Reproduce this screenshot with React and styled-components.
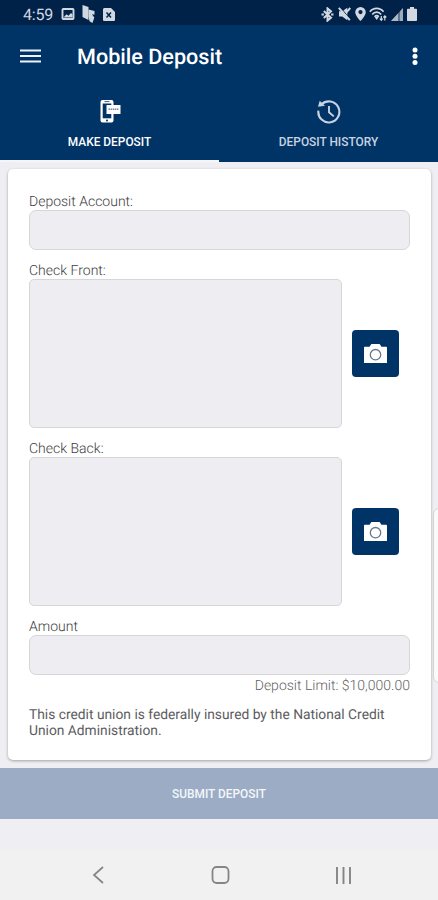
import React, { useState } from 'react';
import styled, { createGlobalStyle } from 'styled-components';

const GlobalStyle = createGlobalStyle`
  * {
    box-sizing: border-box;
  }

  body {
    margin: 0;
    background: #efeff2;
    font-family: Roboto, "Liberation Sans", sans-serif;
    text-rendering: geometricPrecision;
  }

  button {
    font-family: inherit;
    border: none;
    padding: 0;
  }

  svg {
    display: block;
  }
`;

const Screen = styled.div`
  position: relative;
  display: flex;
  flex-direction: column;
  width: 438px;
  height: 900px;
  overflow: hidden;
  background: #efeff3;
`;

const StatusBar = styled.div`
  display: flex;
  align-items: center;
  justify-content: space-between;
  height: 25px;
  padding: 3px 21px 0 23px;
  background: #002148;
  color: #d2d8e2;
`;

const StatusGroup = styled.div`
  display: flex;
  align-items: center;
  gap: ${props => props.$gap}px;
`;

const Clock = styled.span`
  width: 30px;
  padding-top: 1px;
  font-size: 16px;
  line-height: 20px;
  letter-spacing: -0.2px;
`;

const Header = styled.header`
  display: flex;
  align-items: center;
  height: 63px;
  padding: 0 20px;
  background: #003366;
  color: #fff;
`;

const IconButton = styled.button`
  display: flex;
  background: transparent;
  color: inherit;
`;

const Title = styled.h1`
  flex: 1;
  margin: 0 0 0 36px;
  padding-top: 2px;
  font-size: 21.6px;
  font-weight: 500;
  line-height: 28px;
`;

const Tabs = styled.nav`
  display: flex;
  height: 74px;
  background: #003366;
`;

const Tab = styled.button`
  display: flex;
  flex: 1;
  flex-direction: column;
  align-items: center;
  padding-top: 11px;
  background: transparent;
  border-bottom: 2px solid ${props => (props.$active ? '#f4f6fa' : 'transparent')};
  color: ${props => (props.$active ? '#fff' : '#c9d3e0')};
  font-size: 11.9px;
  font-weight: 500;
  line-height: 16px;

  svg {
    margin-bottom: 10px;
  }
`;

const Card = styled.main`
  height: 591px;
  margin: 7px 7px 8px 8px;
  padding: 24px 21px 0;
  background: #fff;
  border-radius: 5px;
  box-shadow: 0 1px 3px rgba(0, 0, 0, 0.32);
`;

const Field = styled.div`
  margin-bottom: 12px;
`;

const Label = styled.div`
  height: 17px;
  padding-top: 1px;
  color: #3c3c40;
  font-size: 14px;
  font-weight: 300;
  line-height: 17px;
`;

const Box = styled.div`
  width: ${props => (props.$photo ? '313px' : '381px')};
  height: ${props => (props.$photo ? '149px' : '40px')};
  background: #eeeef2;
  border: 1px solid #d6d6d9;
  border-radius: ${props => (props.$photo ? 5 : 7)}px;
`;

const PhotoRow = styled.div`
  display: flex;
  align-items: center;
  gap: 10px;
`;

const CameraButton = styled.button`
  display: flex;
  align-items: center;
  justify-content: center;
  width: 47px;
  height: 47px;
  padding-bottom: 2px;
  background: #003366;
  border-radius: 4px;
`;

const Limit = styled.div`
  width: 381px;
  padding-top: 2px;
  color: #5f5f63;
  font-size: 14px;
  font-weight: 300;
  line-height: 18px;
  text-align: right;
`;

const Notice = styled.p`
  margin: 0;
  color: #5c5c60;
  font-size: 13.8px;
  line-height: 16px;
`;

const Submit = styled.button`
  flex: none;
  height: 51px;
  background: #9cacc4;
  color: #f3f7fc;
  font-size: 11.9px;
  font-weight: 500;
`;

const NavBar = styled.div`
  display: flex;
  align-items: center;
  justify-content: space-between;
  height: 50px;
  margin-top: auto;
  padding: 0 86px 0 92px;
  background: #f1f1f2;
  color: #858588;
`;

// Drawer edge peeking in from the right side
const EdgePanel = styled.div`
  position: absolute;
  top: 508px;
  right: -8px;
  width: 13px;
  height: 175px;
  background: #fafafb;
  border: 1px solid #d3d3d6;
  border-radius: 6px;
`;

const MenuIcon = () => (
  <svg width="21" height="16" viewBox="0 0 21 16" stroke="#eef2f7" strokeWidth="2.1">
    <path d="M0 1.5h21M0 7h21M0 12.5h21" />
  </svg>
);

const MoreIcon = () => (
  <svg width="6" height="20" viewBox="0 0 6 20" fill="#fff">
    <circle cx="3" cy="3" r="2.5" />
    <circle cx="3" cy="9.3" r="2.5" />
    <circle cx="3" cy="15.6" r="2.5" />
  </svg>
);

const DepositIcon = () => (
  <svg width="22" height="25" viewBox="0 0 22 25">
    <path
      d="M3.5 1h9a2 2 0 0 1 2 2v18.5a2 2 0 0 1-2 2h-9a2 2 0 0 1-2-2V3a2 2 0 0 1 2-2Z"
      fill="#fff"
    />
    <path d="M3.7 4.5h8.6v14.8H3.7z" fill="#003366" />
    <path d="M5.5 2.6h5" stroke="#003366" strokeWidth="0.8" />
    <circle cx="8" cy="21.4" r="1" fill="#003366" />
    <path d="M7.5 6h14v9h-14z" fill="#fff" />
    <path d="M9.5 10.3h10" stroke="#7188a5" strokeWidth="1.5" strokeDasharray="1.5 0.6" />
  </svg>
);

const HistoryIcon = () => (
  <svg width="25" height="25" viewBox="0 0 25 25" fill="none" stroke="#c9d3e0">
    <path d="M5.5 5.4A10.5 10.5 0 1 1 2.4 11.7" strokeWidth="2.1" />
    <path d="M3.7 1.7 9 6.7 2 7.8Z" fill="#c9d3e0" stroke="none" />
    <path d="M13 7v6.2l4.8 4.2" strokeWidth="1.9" />
  </svg>
);

const CameraIcon = () => (
  <svg width="23" height="20" viewBox="0 0 23 20">
    <path
      d="M1 3.8h4.6L7 1.5c.3-.4.6-.5 1-.5h7c.4 0 .7.1 1 .5l1.4 2.3H22c.5 0 1 .4 1 1V20H0V4.8c0-.6.5-1 1-1Z"
      fill="#fff"
    />
    <circle cx="11.5" cy="11.7" r="5.2" fill="none" stroke="#64788a" strokeWidth="1.3" />
  </svg>
);

const PictureIcon = () => (
  <svg width="14" height="12" viewBox="0 0 13 12" fill="none" stroke="currentColor">
    <rect x="1" y="1" width="11" height="10" rx="0.8" strokeWidth="1.9" />
    <path d="M2 9.5 5 6.2l2 1.6L9.5 5 11 6.5v3Z" fill="currentColor" stroke="none" />
  </svg>
);

const FlagIcon = () => (
  <svg width="13" height="20" viewBox="0 0 13 20" fill="currentColor">
    <path d="M.5 1l6 2v13l-6-3Z" />
    <path d="M6.5 5.5 12.5 7v3.7l-2.6-.5 2.4 3.3-1.8 5.5-3-1.8-1-5Z" />
  </svg>
);

const FileIcon = () => (
  <svg width="12" height="13" viewBox="0 0 12 13">
    <path d="M1 0h7l4 4v8.2l-.8.8H.8L0 12.2V1Z" fill="currentColor" />
    <path d="M3.5 4.5 8 9.5M8 4.5l-4.5 5" stroke="#002148" strokeWidth="1.5" />
  </svg>
);

const BluetoothIcon = () => (
  <svg width="13" height="15" viewBox="0 0 12 15" fill="none" stroke="currentColor" strokeWidth="2">
    <path d="m2.3 4 7.2 6.7L6 13.6V1.4l3.5 2.9L2.3 11" />
    <path d="M0 7.5h2.4M9.6 7.5H12" strokeWidth="2.2" />
  </svg>
);

const MuteIcon = () => (
  <svg width="13" height="14" viewBox="0 0 13 14">
    <path d="M1 4.2h3.2L9.3.8v12.4L4.2 9.5H1Z" fill="currentColor" />
    <path d="m2.4.3 10.5 12.8" stroke="#002148" strokeWidth="1" />
    <path d="m.8.8 11 12.4M12.3 1 8.6 5" stroke="currentColor" strokeWidth="2" />
  </svg>
);

const PinIcon = () => (
  <svg width="11" height="14" viewBox="0 0 11 14">
    <path
      fillRule="evenodd"
      d="M5.5 0A5.3 5.3 0 0 1 10.8 5.2C10.8 8.6 5.5 14 5.5 14S.2 8.6.2 5.2A5.3 5.3 0 0 1 5.5 0Zm0 3a2.1 2.1 0 1 0 0 4.2 2.1 2.1 0 0 0 0-4.2Z"
      fill="currentColor"
    />
  </svg>
);

const WifiIcon = () => (
  <svg width="18" height="15" viewBox="0 0 18 15" fill="none" stroke="currentColor">
    <path d="M.8 4.8C4.4.2 11 .2 14.6 4.8M3.2 7.4c2.4-3.1 6.5-3.1 9 0M5.6 9.7c1.2-1.4 3-1.4 4.2 0" strokeWidth="1.6" />
    <path d="m5.3 9.6 2.4 3.4 2.4-3.4Z" fill="currentColor" stroke="none" />
    <path d="M12.3 13.5V9M10.8 11.7l1.5 1.7 1.4-1.7M15.8 9v4.5M14.4 10.5l1.4-1.7 1.5 1.7" strokeWidth="1.2" />
  </svg>
);

const SignalIcon = () => (
  <svg width="12" height="13" viewBox="0 0 12 13" fill="currentColor">
    <path d="M0 13 12 0v13Z" opacity="0.45" />
    <path d="M0 13 7 5.4V13Z" opacity="0.7" />
    <path d="M9 3.2 12 0v13H9Z" opacity="0.55" />
  </svg>
);

const BatteryIcon = () => (
  <svg width="10" height="14" viewBox="0 0 10 14" fill="currentColor">
    <path d="M3 0h4v1.8h2c.5 0 1 .4 1 1V13c0 .6-.5 1-1 1H1c-.5 0-1-.4-1-1V2.8c0-.6.5-1 1-1h2Z" />
  </svg>
);

const BackIcon = () => (
  <svg width="13" height="18" viewBox="0 0 13 18" fill="none" stroke="currentColor" strokeWidth="1.7">
    <path d="M11 1 2 9l9 8" />
  </svg>
);

const HomeIcon = () => (
  <svg width="19" height="18" viewBox="0 0 19 18" fill="none" stroke="currentColor" strokeWidth="1.8">
    <rect x="1.5" y="1" width="16" height="16" rx="4.2" />
  </svg>
);

const RecentsIcon = () => (
  <svg width="17" height="17" viewBox="0 0 17 17" stroke="currentColor" strokeWidth="1.9">
    <path d="M2 0v17M8.5 0v17M15 0v17" />
  </svg>
);

const CheckPhoto = ({ label }) => (
  <Field>
    <Label>{label}</Label>
    <PhotoRow>
      <Box $photo />
      <CameraButton aria-label={label}>
        <CameraIcon />
      </CameraButton>
    </PhotoRow>
  </Field>
);

const App = () => {
  const [tab, setTab] = useState('make');

  return (
    <>
      <GlobalStyle />
      <Screen>
        <StatusBar>
          <StatusGroup $gap={7.5}>
            <Clock>4:59</Clock>
            <PictureIcon />
            <FlagIcon />
            <FileIcon />
          </StatusGroup>
          <StatusGroup $gap={3.8}>
            <BluetoothIcon />
            <MuteIcon />
            <PinIcon />
            <WifiIcon />
            <SignalIcon />
            <BatteryIcon />
          </StatusGroup>
        </StatusBar>

        <Header>
          <IconButton aria-label="Menu">
            <MenuIcon />
          </IconButton>
          <Title>Mobile Deposit</Title>
          <IconButton aria-label="More">
            <MoreIcon />
          </IconButton>
        </Header>

        <Tabs>
          <Tab $active={tab === 'make'} onClick={() => setTab('make')}>
            <DepositIcon />
            MAKE DEPOSIT
          </Tab>
          <Tab $active={tab === 'history'} onClick={() => setTab('history')}>
            <HistoryIcon />
            DEPOSIT HISTORY
          </Tab>
        </Tabs>

        <Card>
          <Field>
            <Label>Deposit Account:</Label>
            <Box />
          </Field>
          <CheckPhoto label="Check Front:" />
          <CheckPhoto label="Check Back:" />
          <Field>
            <Label>Amount</Label>
            <Box />
            <Limit>Deposit Limit: $10,000.00</Limit>
          </Field>
          <Notice>
            This credit union is federally insured by the National Credit
            <br />
            Union Administration.
          </Notice>
        </Card>

        <Submit>SUBMIT DEPOSIT</Submit>

        <NavBar>
          <BackIcon />
          <HomeIcon />
          <RecentsIcon />
        </NavBar>
        <EdgePanel />
      </Screen>
    </>
  );
};

export default App;
